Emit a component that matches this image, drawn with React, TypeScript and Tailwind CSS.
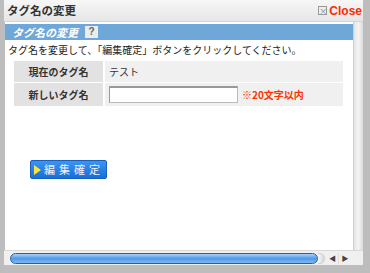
import React from 'react';

const jp = { fontFamily: '"Noto Sans CJK JP", "Noto Sans", sans-serif' };

const App: React.FC = () => {
  return (
    <div className="w-[370px] h-[273px] bg-[#bdbdbd] pl-[4px] pr-[7px] pb-[8px] flex flex-col" style={jp}>
      <div className="h-[22px] shrink-0 bg-gradient-to-b from-[#f7f7f7] to-[#e6e6e6] border-b border-[#d4d4d4] flex items-center justify-between pl-[3px] pr-[1px]">
        <span className="text-[11.5px] font-bold text-[#333] leading-none">タグ名の変更</span>
        <div className="flex items-center gap-[2px]">
          <span className="w-[9px] h-[9px] border border-[#999] bg-[#eee] text-[8px] leading-[7px] text-center text-[#888]">×</span>
          <span className="text-[12px] font-bold text-[#ff2a00] leading-none" style={{ fontFamily: '"Liberation Sans", sans-serif' }}>Close</span>
        </div>
      </div>
      <div className="flex-1 flex min-h-0 pl-[1px]">
        <div className="flex-1 bg-white pt-[2px]">
          <div className="h-[16px] bg-[#6fa7d8] flex items-center pl-[7px] gap-[7px]">
            <span className="text-[11px] font-bold italic text-white leading-none">タグ名の変更</span>
            <span className="w-[13px] h-[12px] bg-[#ececec] text-[10px] text-[#666] font-bold leading-[12px] text-center" style={{ fontFamily: '"Liberation Sans", sans-serif' }}>?</span>
          </div>
          <div className="text-[10px] text-[#222] pl-[3px] pt-[3px] leading-[14px]">
            タグ名を変更して、「編集確定」ボタンをクリックしてください。
          </div>
          <div className="ml-[9px] mr-[10px] mt-[4px] bg-[#f0f0f0]">
            <div className="flex h-[22px] border-b border-white">
              <div className="w-[91px] bg-[#e2e2e2] border-r-2 border-white flex items-center justify-center text-[10px] font-bold text-[#333]">現在のタグ名</div>
              <div className="flex items-center pl-[4px] text-[10px] text-[#333]">テスト</div>
            </div>
            <div className="flex h-[23px]">
              <div className="w-[91px] bg-[#e2e2e2] border-r-2 border-white flex items-center justify-center text-[10px] font-bold text-[#333]">新しいタグ名</div>
              <div className="flex items-center pl-[4px] gap-[4px]">
                <div className="w-[129px] h-[17px] bg-white border border-[#bbb] border-t-2 border-t-[#999] border-l-[#999]" />
                <span className="text-[10px] font-bold text-[#ff3300]">※20文字以内</span>
              </div>
            </div>
          </div>
          <div className="pl-[25px] pt-[54px]">
            <div className="w-[77px] h-[19px] bg-gradient-to-b from-[#3b93f2] to-[#1470dc] border border-[#1a5fb8] rounded-[2px] flex items-center pl-[3px] gap-[3px]">
              <span className="w-0 h-0 border-y-[5px] border-y-transparent border-l-[7px] border-l-[#ffe23a]" />
              <span className="text-[11px] text-[#f2f2f2] tracking-[4px] leading-none">編集確定</span>
            </div>
          </div>
        </div>
        <div className="w-[10px] bg-gradient-to-r from-[#e4e4e4] via-[#f4f4f4] to-[#dadada] border-l border-[#d0d0d0]" />
      </div>
      <div className="h-[15px] shrink-0 bg-[#f0f0f0] border-t border-[#d8d8d8] flex items-center pl-[6px] pr-[12px]">
        <div className="flex-1 h-[11px] rounded-full border border-[#2d5e9c] bg-gradient-to-b from-[#a8d0f7] via-[#4f9bea] to-[#7fb7f2]" />
        <div className="w-[7px] h-[11px] rounded-r-full bg-gradient-to-r from-[#f8f8f8] to-[#d8d8d8] border border-l-0 border-[#cfcfcf]" />
        <div className="w-[12px] h-[11px] ml-[2px] flex items-center justify-center text-[7px] text-[#444] border-r border-[#ddd]">◀</div>
        <div className="w-[12px] h-[11px] flex items-center justify-center text-[7px] text-[#444]">▶</div>
      </div>
    </div>
  );
};

export default App;
